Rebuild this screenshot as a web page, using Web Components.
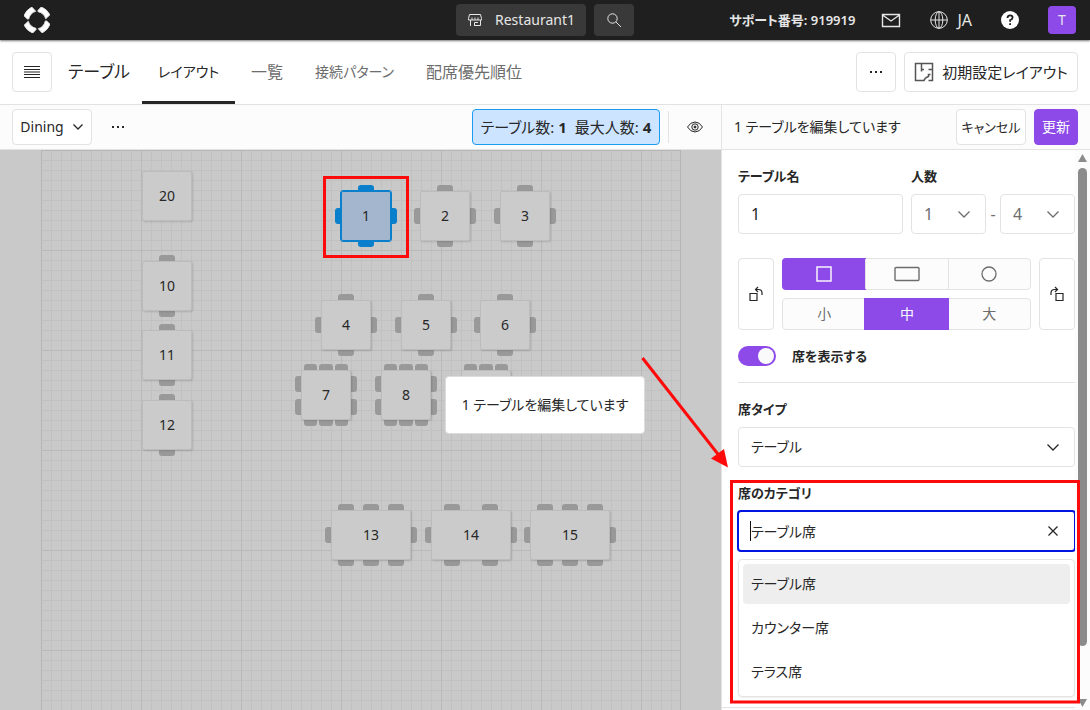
<!DOCTYPE html>
<html lang="ja">
<head>
<meta charset="utf-8">
<meta name="viewport" content="width=device-width, initial-scale=1">
<title>テーブル レイアウト</title>
<style>
  body {
    margin: 0;
    font-family: "Noto Sans", "Noto Sans CJK JP", sans-serif;
    font-size: 14px;
    line-height: 20px;
    font-feature-settings: "palt";
    color: #272727;
    --accent: #8d4ae8;
    --line: #e3e3e3;
    --mark: #ff0a0a;
  }
</style>
</head>
<body>
<table-app></table-app>

<script>
const BASE = `
  *, *::before, *::after { box-sizing: border-box; }
  button, input, select { font: inherit; font-feature-settings: inherit; color: inherit; margin: 0; }
  button { display: flex; align-items: center; justify-content: center; gap: 8px; padding: 0; white-space: nowrap;
           background: #fff; border: 1px solid var(--line); border-radius: 4px; cursor: pointer; }
`;

class BaseElement extends HTMLElement {
  constructor() {
    super();
    this.attachShadow({ mode: 'open' });
  }
  connectedCallback() {
    this.shadowRoot.innerHTML = `<style>${BASE}${this.styles()}</style>${this.markup()}`;
  }
  styles() { return ''; }
  markup() { return ''; }
}

/* ---------- icons ---------- */
const ICONS = {
  logo: [26, 26, `<g fill="#fff" transform="translate(13 13)">
      ${[0, 90, 180, 270].map(a => `<path transform="rotate(${a})" d="M1-9.600 4.300-13Q9.800-11 12.900-5.200L8.700-1.300Q7.200-6.800 1-8.400Z"/>`).join('')}</g>`],
  store: [16, 16, `<path d="M2.500 2.500h11l1 4v1.500h-13V6.500zM5 5.500v2.500M8 5.500v2.500M11 5.500v2.500M3.500 8v6M7.500 14v-3.500h3.500M7 13.500h6.500V8"/>`],
  search: [16, 16, `<circle cx="6.500" cy="6.500" r="4.700"/><path d="M10 10l5 5"/>`],
  mail: [20, 16, `<path d="M1.500 2.500h17v12h-17zM1.500 3l8.500 6 8.500-6" stroke-width="1.400"/>`],
  globe: [20, 20, `<circle cx="10" cy="10" r="8.300"/><ellipse cx="10" cy="10" rx="3.800" ry="8.300"/><path d="M1.700 10h16.600M10 1.700v16.600"/>`],
  help: [20, 20, `<circle cx="10" cy="10" r="9" fill="#fff" stroke="none"/><path d="M7.500 8q0-2.600 2.600-2.600T12.600 7.600q0 1.500-2.500 2.600v1.600M10.100 13.200v1.800" stroke="#1f1f1f" stroke-width="1.800"/>`],
  menu: [16, 16, `<path d="M0 2.500h16M0 13.500h16" stroke-width="1.200"/><path d="M0 5.500h16M0 8h16M0 10.500h16" stroke-width="1.200"/>`],
  dots: [16, 16, `<path d="M2 7h2v2H2zM7 7h2v2H7zM12 7h2v2h-2z" fill="currentColor" stroke="none"/>`],
  plan: [20, 20, `<path d="M7.500 1.500h-6v17h6M7.500 1.500h11v17h-4M7.500 1.500v8M7.500 7.500h2.500M14.500 7.500h4M7.500 18.500h2.500q1-3 4.500-4v-2h2" stroke="#555" stroke-width="1.500"/>`],
  eye: [18, 16, `<path d="M1.500 8Q4.500 3 9 3t7.500 5Q13.500 13 9 13T1.500 8z"/><circle cx="9" cy="8" r="3.200"/><circle cx="9" cy="8" r="1" fill="currentColor"/>`],
  chevron: [16, 16, `<path d="M2.500 5.500 8 11l5.500-5.500" stroke-width="1.300"/>`],
  chevronSmall: [12, 12, `<path d="M1.500 3.500 6 8l4.500-4.500" stroke-width="1.300"/>`],
  close: [12, 12, `<path d="M1.500 1.500l9 9M10.500 1.500l-9 9" stroke-width="1.300"/>`],
  square: [16, 16, `<rect x="1" y="1" width="14" height="14" stroke-width="1.400"/>`],
  rect: [26, 16, `<rect x="1" y="1.500" width="24" height="13" rx="1" stroke-width="1.400"/>`],
  circle: [16, 16, `<circle cx="8" cy="8" r="7" stroke-width="1.300"/>`],
  rotateLeft: [14, 16, `<path d="M1 7.500h7v7H1zM13 9V7Q13 3.500 9.500 3.500H7M9 1 6.500 3.500 9 6" stroke-width="1.200"/>`],
  rotateRight: [14, 16, `<path d="M6 7.500h7v7H6zM1 9V7Q1 3.500 4.500 3.500H7M5 1l2.500 2.500L5 6" stroke-width="1.200"/>`],
};
class UiIcon extends BaseElement {
  styles() { return `:host { display: block; flex: none; } svg { display: block; }`; }
  markup() {
    const [w, h, body] = ICONS[this.getAttribute('name')];
    return `<svg width="${w}" height="${h}" viewBox="0 0 ${w} ${h}" fill="none" stroke="currentColor" aria-hidden="true">${body}</svg>`;
  }
}
customElements.define('ui-icon', UiIcon);

/* ---------- top bar ---------- */
class TopBar extends BaseElement {
  styles() { return `
    :host { display: grid; grid-template-columns: 1fr auto 1fr; align-items: center; height: 40px; flex: none;
            padding: 0 14px; background: #1f1f1f; color: #e6e6e6; box-shadow: 0 1px 2px #0008; position: relative; z-index: 1; }
    .logo { padding-left: 10px; }
    .center { display: flex; gap: 8px; }
    .center button { height: 32px; background: #393939; border: 0; color: #e6e6e6; gap: 12px; }
    .shop { width: 130px; }
    .find { width: 40px; }
    .right { display: flex; align-items: center; justify-content: flex-end; }
    .support { font-size: 13px; font-weight: 600; margin-right: 26px; white-space: nowrap; }
    .right button { background: none; border: 0; color: inherit; }
    .right .lang { margin: 0 28px; font-size: 16px; }
    .right .avatar { width: 28px; height: 28px; background: var(--accent); margin-left: 28px; }
  `; }
  markup() { return `
    <div class="logo"><ui-icon name="logo"></ui-icon></div>
    <div class="center">
      <button class="shop"><ui-icon name="store"></ui-icon>Restaurant1</button>
      <button class="find" aria-label="検索"><ui-icon name="search"></ui-icon></button>
    </div>
    <div class="right">
      <span class="support">サポート番号: 919919</span>
      <button aria-label="メール"><ui-icon name="mail"></ui-icon></button>
      <button class="lang"><ui-icon name="globe"></ui-icon>JA</button>
      <button aria-label="ヘルプ"><ui-icon name="help"></ui-icon></button>
      <button class="avatar">T</button>
    </div>`; }
}
customElements.define('top-bar', TopBar);

/* ---------- page header with tabs ---------- */
class PageHeader extends BaseElement {
  styles() { return `
    :host { display: flex; align-items: center; height: 65px; flex: none; padding: 0 12px; border-bottom: 1px solid var(--line);
            background: #fff; font-size: 16px; line-height: 24px; }
    .menu, .more { width: 40px; height: 40px; }
    h1 { margin: 0 12px 0 16px; font-size: 17px; font-weight: 400; white-space: nowrap; line-height: 24px; }
    nav { display: flex; align-self: stretch; flex: 1; }
    a { display: flex; align-items: center; padding: 0 16px; color: #6d6d6d; text-decoration: none; white-space: nowrap;
        border-top: 3px solid transparent; border-bottom: 3px solid transparent; }
    a[aria-current] { color: #272727; border-bottom-color: #272727; }
    .kana { font-size: 14px; }
    .actions { display: flex; gap: 8px; }
    .initial { height: 40px; width: 174px; font-size: 15px; }
  `; }
  markup() { return `
    <button class="menu" aria-label="メニュー"><ui-icon name="menu"></ui-icon></button>
    <h1>テーブル</h1>
    <nav>
      <a class="kana" href="#layout" aria-current="page">レイアウト</a>
      <a href="#list">一覧</a>
      <a class="kana" href="#patterns">接続パターン</a>
      <a href="#priority">配席優先順位</a>
    </nav>
    <div class="actions">
      <button class="more" aria-label="その他"><ui-icon name="dots"></ui-icon></button>
      <button class="initial"><ui-icon name="plan"></ui-icon>初期設定レイアウト</button>
    </div>`; }
}
customElements.define('page-header', PageHeader);

/* ---------- floor toolbar ---------- */
class FloorToolbar extends BaseElement {
  styles() { return `
    :host { display: flex; align-items: center; height: 45px; flex: none; padding: 0 8px 0 12px; background: #fcfcfc;
            border-bottom: 1px solid var(--line); }
    .area { width: 80px; height: 36px; gap: 8px; }
    .icon { width: 36px; height: 36px; border: 0; background: none; }
    .more { margin: 0 auto 0 8px; }
    .count { display: flex; align-items: center; justify-content: center; gap: 8px; width: 188px; height: 36px; background: #cce4ff;
             border: 1px solid #1a9df0; border-radius: 4px; font-size: 15px; white-space: nowrap; }
    .rule { width: 1px; height: 32px; background: var(--line); margin: 0 8px; }
  `; }
  markup() { return `
    <button class="area">Dining<ui-icon name="chevronSmall"></ui-icon></button>
    <button class="icon more" aria-label="その他"><ui-icon name="dots"></ui-icon></button>
    <div class="count"><span>テーブル数: <b>1</b></span><span>最大人数: <b>4</b></span></div>
    <div class="rule"></div>
    <button class="icon" aria-label="表示"><ui-icon name="eye"></ui-icon></button>`; }
}
customElements.define('floor-toolbar', FloorToolbar);

/* ---------- a table on the floor plan; seats = "top right bottom left" ---------- */
class FloorTable extends BaseElement {
  styles() {
    const a = n => this.getAttribute(n);
    return `
    :host { display: block; position: absolute; left: ${a('x')}px; top: ${a('y')}px; width: ${a('w') || 50}px; height: 50px;
            --seat: #999; --top: #cbcbcb; --edge: #bcbcbc; }
    :host([selected]) { --seat: #0a7fcb; --top: #a3b6cd; --edge: #0a7fcb; }
    .top { width: 100%; height: 100%; display: flex; align-items: center; justify-content: center; background: var(--top);
           border: 1px solid var(--edge); border-radius: 2px; box-shadow: 1px 1px 2px #0002; position: relative; }
    :host([selected]) .top { outline: 1px solid var(--edge); box-shadow: none; }
    .side { position: absolute; display: flex; justify-content: space-around; gap: 2px; }
    .n, .s { left: 0; right: 0; padding: 0 3px; height: 6px; }
    .e, .w { top: 0; bottom: 0; padding: 3px 0; width: 6px; flex-direction: column; }
    .n { top: -6px; } .s { bottom: -6px; } .e { right: -6px; } .w { left: -6px; }
    i { background: var(--seat); flex: 0 1 16px; }
    .n i { border-radius: 3px 3px 0 0; } .s i { border-radius: 0 0 3px 3px; }
    .e i { border-radius: 0 3px 3px 0; } .w i { border-radius: 3px 0 0 3px; }
  `; }
  markup() {
    const seats = (this.getAttribute('seats') || '0 0 0 0').split(' ');
    return ['n', 'e', 's', 'w'].map((d, k) => `<div class="side ${d}">${'<i></i>'.repeat(+seats[k])}</div>`).join('') +
      `<div class="top"><slot></slot></div>`;
  }
}
customElements.define('floor-table', FloorTable);

/* ---------- floor plan canvas ---------- */
const TABLES = [
  ['20', 101, 21], ['10', 101, 111, '1 0 1 0'], ['11', 101, 180, '1 0 1 0'], ['12', 101, 250, '1 0 1 0'],
  ['1', 300, 41, '1 1 1 1'], ['2', 379, 41, '1 1 1 1'], ['3', 459, 41, '1 1 1 1'],
  ['4', 280, 150, '1 1 1 1'], ['5', 360, 150, '1 1 1 1'], ['6', 439, 150, '1 1 1 1'],
  ['7', 260, 220, '3 2 3 2'], ['8', 340, 220, '3 2 3 2'], ['', 420, 220, '3 2 3 2'],
  ['13', 290, 360, '3 1 3 1', 80], ['14', 390, 360, '2 1 2 1', 80], ['15', 489, 360, '3 1 3 1', 80],
];
class FloorPlan extends BaseElement {
  styles() { return `
    :host { display: block; flex: 1; min-height: 0; overflow: hidden; background: #c9c9c9; padding: 0 41px; }
    .grid { position: relative; width: 640px; height: 100%; border: 1px solid #b6b6b6; border-bottom: 0;
      background:
        linear-gradient(90deg, #b9b9b9 1px, transparent 1px) -1px -1px / 100px 100px,
        linear-gradient(#b9b9b9 1px, transparent 1px) -1px -1px / 100px 100px,
        linear-gradient(90deg, #c1c1c1 1px, transparent 1px) -1px -1px / 10px 10px,
        linear-gradient(#c1c1c1 1px, transparent 1px) -1px -1px / 10px 10px; }
    .mark { position: absolute; left: 281px; top: 25px; width: 86px; height: 82px; border: 3px solid var(--mark); }
    .toast { position: absolute; left: 403px; top: 225px; width: 200px; height: 58px; display: flex; align-items: center; justify-content: center;
      background: #fff; border: 1px solid #ddd; border-radius: 4px; white-space: nowrap; }
  `; }
  markup() { return `<div class="grid">
    ${TABLES.map(([n, x, y, s, w]) => `<floor-table x="${x - 1}" y="${y - 1}" ${s ? `seats="${s}"` : ''} ${w ? `w="${w}"` : ''} ${n === '1' ? 'selected' : ''}>${n}</floor-table>`).join('')}
    <div class="mark"></div>
    <div class="toast" role="status">1 テーブルを編集しています</div>
  </div>`; }
}
customElements.define('floor-plan', FloorPlan);

/* ---------- styled drop-down ---------- */
class UiSelect extends BaseElement {
  styles() { return `
    :host { display: grid; align-items: center; }
    select, ui-icon { grid-area: 1 / 1; }
    select { appearance: none; width: 100%; height: 40px; padding: 0 12px; background: #fff; border: 1px solid var(--line); border-radius: 4px; }
    ui-icon { justify-self: end; margin-right: 14px; pointer-events: none; }
  `; }
  markup() { return `<select aria-label="${this.getAttribute('label')}"><option>${this.getAttribute('value')}</option></select><ui-icon name="chevron"></ui-icon>`; }
}
customElements.define('ui-select', UiSelect);

/* ---------- segmented radio group ---------- */
class SegmentGroup extends BaseElement {
  styles() { return `
    :host { display: grid; grid-template-columns: repeat(3, 1fr); height: 32px; color: #6d6d6d; border: 1px solid var(--line); border-radius: 4px; background: #fcfcfc; }
    label { display: flex; align-items: center; justify-content: center; position: relative; }
    label + label { border-left: 1px solid var(--line); }
    :host([plain]) label + label { border-color: transparent; }
    input { appearance: none; position: absolute; inset: 0; }
    label:has(:checked) { background: var(--accent); color: #fff; margin: -1px; }
    label:first-of-type:has(:checked) { border-radius: 4px 0 0 4px; }
  `; }
  markup() {
    const name = this.getAttribute('name'), on = this.getAttribute('value');
    return this.getAttribute('options').split(' ').map(o => ICONS[o]
      ? `<label><input type="radio" name="${name}" aria-label="${o}" ${o === on ? 'checked' : ''}><ui-icon name="${o}"></ui-icon></label>`
      : `<label><input type="radio" name="${name}" ${o === on ? 'checked' : ''}>${o}</label>`).join('');
  }
}
customElements.define('segment-group', SegmentGroup);

/* ---------- category combo box with its open list ---------- */
class ComboBox extends BaseElement {
  styles() { return `
    :host { display: block; position: relative; color: #272727; }
    .box { display: flex; align-items: center; height: 42px; margin: -1px; padding: 0 9px 0 11px; border: 2px solid #0014e0; border-radius: 4px; background: #fff; }
    .caret { width: 1px; height: 20px; background: #111; }
    input { flex: 1; min-width: 0; height: 36px; padding: 0; border: 0; outline: 0; background: none; }
    .box button { width: 24px; height: 24px; border: 0; background: none; }
    ul { position: absolute; top: 49px; left: 0; right: 0; margin: 0; padding: 4px; list-style: none; display: grid; gap: 4px; height: 138px; align-content: start;
         background: #fff; border: 1px solid var(--line); border-radius: 4px; box-shadow: 0 1px 2px #0001; }
    li { height: 40px; display: flex; align-items: center; padding: 0 8px; border-radius: 4px; }
    li[aria-selected=true] { background: #eee; }
  `; }
  markup() { return `
    <div class="box"><span class="caret"></span><input type="text" role="combobox" aria-expanded="true" aria-label="席のカテゴリ" value="テーブル席">
      <button type="button" aria-label="クリア"><ui-icon name="close"></ui-icon></button></div>
    <ul role="listbox"><li role="option" aria-selected="true">テーブル席</li><li role="option">カウンター席</li><li role="option">テラス席</li></ul>`; }
}
customElements.define('combo-box', ComboBox);

/* ---------- scrollbar drawn beside the form ---------- */
class PanelScrollbar extends BaseElement {
  styles() { return `
    :host { display: flex; flex-direction: column; align-items: center; width: 15px; padding: 4px 0 3px; background: #fcfcfc; }
    svg { display: block; flex: none; }
    .track { flex: 1; width: 9px; margin: 6px 0; }
    .thumb { height: 91%; background: #8b8b8b; border-radius: 5px; }
  `; }
  markup() { return `<svg width="9" height="8"><path d="M4.500 0 9 8H0z" fill="#8b8b8b"/></svg>
    <div class="track"><div class="thumb"></div></div>
    <svg width="9" height="8"><path d="M4.500 8 9 0H0z" fill="#8b8b8b"/></svg>`; }
}
customElements.define('panel-scrollbar', PanelScrollbar);

/* ---------- editing panel ---------- */
class EditPanel extends BaseElement {
  styles() { return `
    :host { display: flex; flex-direction: column; width: 369px; flex: none; border-left: 1px solid var(--line); background: #fff; min-height: 0; }
    header { display: flex; align-items: center; gap: 8px; height: 45px; flex: none; padding: 0 12px; border-bottom: 1px solid var(--line); background: #fcfcfc; }
    h2 { flex: 1; margin: 0; font-size: 14px; font-weight: 400; white-space: nowrap; }
    header button { height: 36px; }
    .cancel { width: 70px; font-size: 13px; }
    .save { width: 44px; background: var(--accent); border-color: var(--accent); color: #fff; }
    .body { display: flex; flex: 1; min-height: 0; }
    .main { flex: 1; min-width: 0; display: flex; flex-direction: column; }
    form { flex: 1; min-height: 0; overflow: hidden; padding: 16px 0 0 16px; }
    .foot { height: 3px; flex: none; background: #fcfcfc; border-top: 1px solid var(--line); }
    .label { display: block; height: 28px; line-height: 20px; font-size: 13px; font-weight: 600; }
    .names { display: grid; grid-template-columns: 1fr 164px; gap: 8px; }
    .names input { width: 100%; height: 40px; padding: 0 12px; border: 1px solid var(--line); border-radius: 4px; font-size: 16px; display: block; }
    .range { display: grid; grid-template-columns: 75px 1fr 75px; align-items: center; text-align: center; color: #6d6d6d; font-size: 16px; }
    .shape { display: grid; grid-template-columns: 36px 1fr 36px; gap: 8px; height: 72px; margin: 24px 0 16px; }
    .segs { display: grid; gap: 8px; }
    .toggle { display: flex; align-items: center; gap: 16px; height: 20px; font-size: 13px; font-weight: 600; }
    .toggle input { appearance: none; width: 38px; height: 20px; border-radius: 10px; background: var(--accent); display: flex; align-items: center; justify-content: flex-end; padding: 0 2px; }
    .toggle input::after { content: ""; width: 16px; height: 16px; border-radius: 50%; background: #fafafa; }
    hr { border: 0; border-top: 1px solid var(--line); margin: 16px 0; }
    .category { margin-top: 16px; }
  `; }
  markup() { return `
    <header><h2>1 テーブルを編集しています</h2><button class="cancel">キャンセル</button><button class="save">更新</button></header>
    <div class="body"><div class="main"><form>
      <div class="names">
        <div><label class="label" for="name">テーブル名</label><input id="name" type="text" value="1"></div>
        <div><span class="label">人数</span>
          <div class="range"><ui-select label="最小人数" value="1"></ui-select><span>-</span><ui-select label="最大人数" value="4"></ui-select></div></div>
      </div>
      <div class="shape">
        <button type="button" aria-label="左に回転"><ui-icon name="rotateLeft"></ui-icon></button>
        <div class="segs">
          <segment-group name="shape" options="square rect circle" value="square"></segment-group>
          <segment-group plain name="size" options="小 中 大" value="中"></segment-group>
        </div>
        <button type="button" aria-label="右に回転"><ui-icon name="rotateRight"></ui-icon></button>
      </div>
      <label class="toggle"><input type="checkbox" role="switch" checked>席を表示する</label>
      <hr>
      <span class="label">席タイプ</span>
      <ui-select label="席タイプ" value="テーブル"></ui-select>
      <span class="label category">席のカテゴリ</span>
      <combo-box></combo-box>
    </form><div class="foot"></div></div><panel-scrollbar aria-hidden="true"></panel-scrollbar></div>`; }
}
customElements.define('edit-panel', EditPanel);

/* ---------- red arrow and frame pointing out the category field ---------- */
class CalloutMark extends BaseElement {
  styles() { return `:host { display: block; position: absolute; right: 0; top: 340px; z-index: 2; pointer-events: none; color: var(--mark); } svg { display: block; }`; }
  markup() { return `<svg width="460" height="370" fill="none" stroke="currentColor" stroke-width="3">
    <path d="M12.500 18 91 118"/><path d="M98 127.500 94 109 81 118.500z" fill="currentColor" stroke="none"/>
    <rect x="101.500" y="141.500" width="347" height="220.500"/></svg>`; }
}
customElements.define('callout-mark', CalloutMark);

/* ---------- application shell ---------- */
class TableApp extends BaseElement {
  styles() { return `
    :host { display: flex; flex-direction: column; height: 100vh; position: relative; overflow: hidden; }
    main { display: flex; flex: 1; min-height: 0; }
    .floor { display: flex; flex-direction: column; flex: 1; min-width: 0; }
  `; }
  markup() { return `
    <top-bar></top-bar>
    <page-header></page-header>
    <main><div class="floor"><floor-toolbar></floor-toolbar><floor-plan></floor-plan></div><edit-panel></edit-panel></main>
    <callout-mark></callout-mark>`; }
}
customElements.define('table-app', TableApp);
</script>
</body>
</html>
